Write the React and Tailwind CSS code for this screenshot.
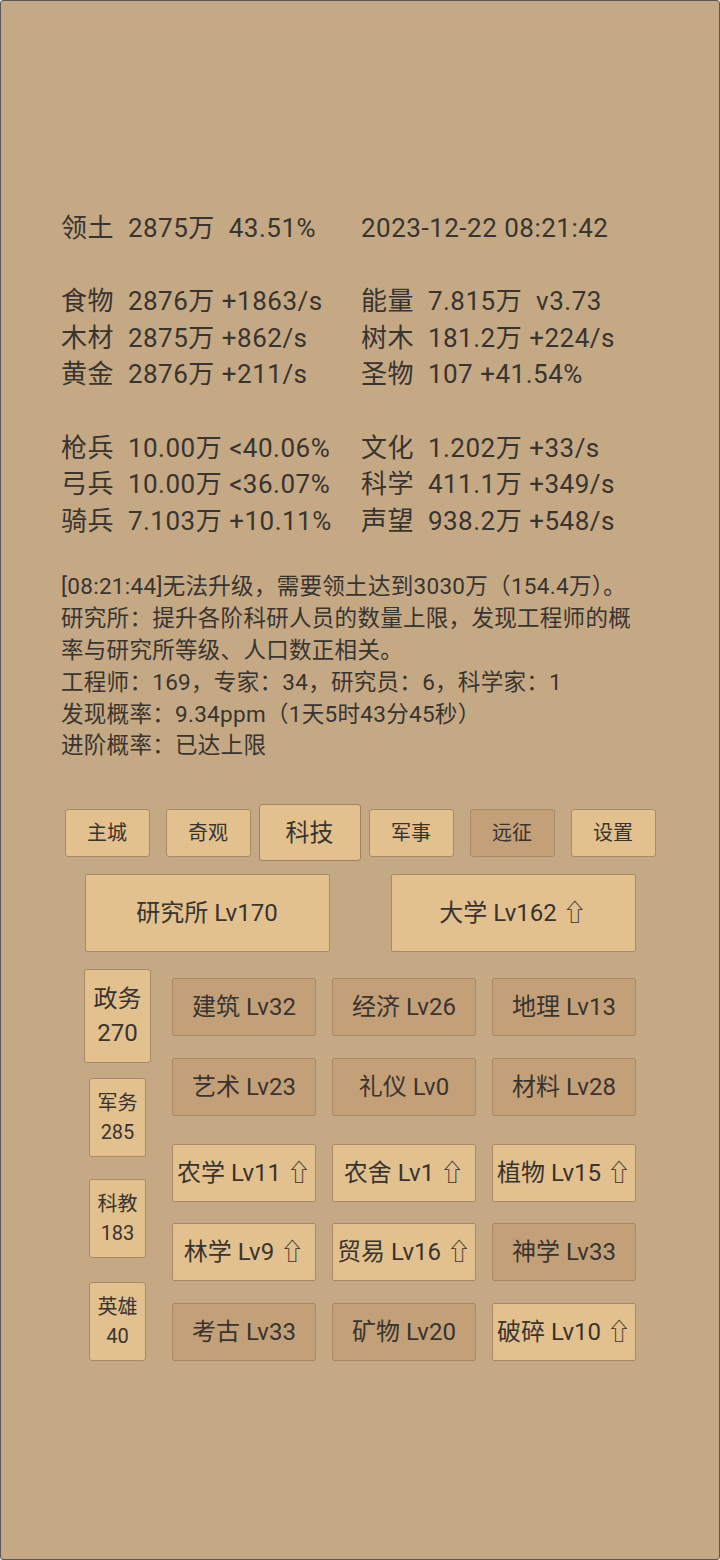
import React from 'react';

const FONT = { fontFamily: 'Roboto, "Noto Sans CJK SC", "DejaVu Sans", sans-serif' };

/* ── Stat lines (left, right) ───────────────────────────────── */
const statRows = [
  ['领土  2875万  43.51%', '2023-12-22 08:21:42'],
  null,
  ['食物  2876万 +1863/s', '能量  7.815万  v3.73'],
  ['木材  2875万 +862/s', '树木  181.2万 +224/s'],
  ['黄金  2876万 +211/s', '圣物  107 +41.54%'],
  null,
  ['枪兵  10.00万 <40.06%', '文化  1.202万 +33/s'],
  ['弓兵  10.00万 <36.07%', '科学  411.1万 +349/s'],
  ['骑兵  7.103万 +10.11%', '声望  938.2万 +548/s'],
];

const logLines = [
  '[08:21:44]无法升级，需要领土达到3030万（154.4万）。',
  '研究所：提升各阶科研人员的数量上限，发现工程师的概率与研究所等级、人口数正相关。',
  '工程师：169，专家：34，研究员：6，科学家：1',
  '发现概率：9.34ppm（1天5时43分45秒）',
  '进阶概率：已达上限',
];

const tabs = [
  { name: '主城' },
  { name: '奇观' },
  { name: '科技', active: true },
  { name: '军事' },
  { name: '远征', dark: true },
  { name: '设置' },
];

const side = [
  { name: '政务', n: 270, active: true, mt: 'mt-0' },
  { name: '军务', n: 285, mt: 'mt-[15px]' },
  { name: '科教', n: 183, mt: 'mt-[22px]' },
  { name: '英雄', n: 40, mt: 'mt-[24px]' },
];

const grid = [
  { mt: 'mt-[9px]', items: [['建筑 Lv32', 1], ['经济 Lv26', 1], ['地理 Lv13', 1]] },
  { mt: 'mt-[22px]', items: [['艺术 Lv23', 1], ['礼仪 Lv0', 1], ['材料 Lv28', 1]] },
  { mt: 'mt-[28px]', items: [['农学 Lv11 ⇧', 0], ['农舍 Lv1 ⇧', 0], ['植物 Lv15 ⇧', 0]] },
  { mt: 'mt-[21px]', items: [['林学 Lv9 ⇧', 0], ['贸易 Lv16 ⇧', 0], ['神学 Lv33', 1]] },
  { mt: 'mt-[22px]', items: [['考古 Lv33', 1], ['矿物 Lv20', 1], ['破碎 Lv10 ⇧', 0]] },
];

export default function App() {
  return (
    <div className="w-[720px] h-[1560px] bg-[#c5a985] border border-[#585858] rounded-[3px] text-[#383430] overflow-hidden"
         style={FONT}>
      <div className="px-[60px] pt-[209px]">

        {/* ── Stats ─────────────────────────────────────────── */}
        <div className="text-[26px] leading-[36.6px] tracking-[0.5px] whitespace-pre">
          {statRows.map((row, i) =>
            row ? (
              <div key={i} className="flex h-[36.6px]">
                <div className="w-[300px]">{row[0]}</div>
                <div>{row[1]}</div>
              </div>
            ) : (
              <div key={i} className="h-[36.6px]" />
            )
          )}
        </div>

        {/* ── Log ───────────────────────────────────────────── */}
        <div className="mt-[32px] w-[586px] text-[22.5px] leading-[31.8px] tracking-[0.3px]">
          {logLines.map((l, i) => <div key={i}>{l}</div>)}
        </div>
      </div>

      {/* ── Tabs ────────────────────────────────────────────── */}
      <div className="mt-[42px] flex justify-center items-center">
        {tabs.map(t => (
          <div key={t.name}
               className={
                 t.active
                   ? 'w-[102px] h-[57px] flex items-center justify-center text-[24px] bg-[#e3c18e] border border-[#9c8160] rounded-[3px]'
                   : 'mx-2 w-[85px] h-[48px] flex items-center justify-center text-[20px] border border-[#a88b65] rounded-[3px] ' +
                     (t.dark ? 'bg-[#c4a078]' : 'bg-[#e3c18e]')
               }>
            {t.name}
          </div>
        ))}
      </div>

      {/* ── Main buildings ──────────────────────────────────── */}
      <div className="mt-[13px] flex justify-center gap-[61px]">
        <div className="w-[245px] h-[78px] flex items-center justify-center text-[24px] bg-[#e3c18e] border border-[#a88b65] rounded-[2px]">
          研究所 Lv170
        </div>
        <div className="w-[245px] h-[78px] flex items-center justify-center text-[24px] bg-[#e3c18e] border border-[#a88b65] rounded-[2px]">
          大学 Lv162 ⇧
        </div>
      </div>

      {/* ── Category + tech grid ────────────────────────────── */}
      <div className="mt-[17px] flex justify-center">
        <div className="w-[67px] flex flex-col items-center">
          {side.map(s => (
            <div key={s.name}
                 className={
                   s.mt + ' flex flex-col items-center justify-center bg-[#e3c18e] border border-[#a88b65] rounded-[3px] ' +
                   (s.active ? 'w-[67px] h-[94px] text-[24px] leading-[34px]' : 'w-[57px] h-[79px] text-[20px] leading-[29px]')
                 }>
              <div>{s.name}</div>
              <div>{s.n}</div>
            </div>
          ))}
        </div>

        <div className="ml-[21px] w-[464px]">
          {grid.map((row, i) => (
            <div key={i} className={row.mt + ' grid grid-cols-3 gap-[16px]'}>
              {row.items.map(([label, dark]) => (
                <div key={label}
                     className={
                       'h-[58px] flex items-center justify-center text-[24px] whitespace-nowrap border border-[#a88b65] rounded-[2px] ' +
                       (dark ? 'bg-[#c4a078]' : 'bg-[#e3c18e]')
                     }>
                  {label}
                </div>
              ))}
            </div>
          ))}
        </div>
      </div>
    </div>
  );
}
